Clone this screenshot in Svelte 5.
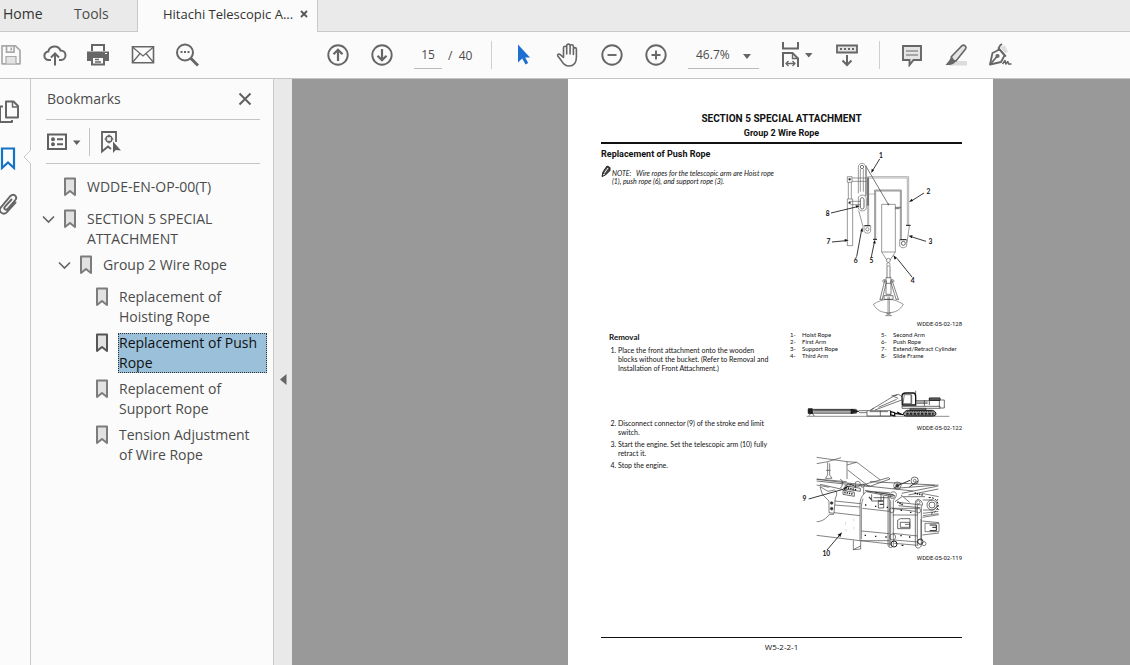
<script lang="ts">
  let selected = $state(4);
  let pageNumber = $state('15');

  const bookmarks = [
    { label: 'WDDE-EN-OP-00(T)', depth: 0, open: false },
    { label: 'SECTION 5 SPECIAL ATTACHMENT', depth: 0, open: true },
    { label: 'Group 2 Wire Rope', depth: 1, open: true },
    { label: 'Replacement of Hoisting Rope', depth: 2, open: false },
    { label: 'Replacement of Push Rope', depth: 2, open: false },
    { label: 'Replacement of Support Rope', depth: 2, open: false },
    { label: 'Tension Adjustment of Wire Rope', depth: 2, open: false }
  ];

  const parts = [
    ['1-', 'Hoist Rope', '5-', 'Second Arm'],
    ['2-', 'First Arm', '6-', 'Push Rope'],
    ['3-', 'Support Rope', '7-', 'Extend/Retract Cylinder'],
    ['4-', 'Third Arm', '8-', 'Slide Frame']
  ];
</script>

<div class="app">
  <nav class="tabs" aria-label="Documents">
    <button class="tab home">Home</button>
    <button class="tab tools">Tools</button>
    <div class="tab current">
      <span>Hitachi Telescopic A...</span>
      <button class="tab-close" aria-label="Close tab">
        <svg width="8" height="8" viewBox="0 0 8 8"><path d="M1 1l6 6M7 1l-6 6" stroke="#555" stroke-width="1.8" /></svg>
      </button>
    </div>
    <div class="tab-rest"></div>
  </nav>

  <div class="toolbar" role="toolbar" aria-label="Main tools">
    <div class="group files">
      <button class="tool" aria-label="Save">
        <svg width="24" height="24" viewBox="0 0 24 24" fill="none" stroke="#a9a9a9" stroke-width="1.7"><path d="M3 2.8h13.5l4.5 4.5v13.5H3z" stroke-linejoin="round" /><path d="M7.5 3v6.2h7.5V3M12.2 4.5v3" /><path d="M7 20.5v-7h10v7" fill="#e4e4e4" stroke-width="1.2" /></svg>
      </button>
      <button class="tool" aria-label="Upload">
        <svg width="24" height="24" viewBox="0 0 24 24" fill="none" stroke="#666" stroke-width="2"><path d="M8 17H5.8a4.2 4.2 0 0 1-.5-8.4A6.4 6.4 0 0 1 17.6 7.6 4.7 4.7 0 0 1 18 17h-2" /><path d="M12 22.5V11M8 14.5l4-4 4 4" /></svg>
      </button>
      <button class="tool" aria-label="Print">
        <svg width="24" height="24" viewBox="0 0 24 24" fill="none" stroke="#666" stroke-width="2"><path d="M5 8V2h12v6" /><path d="M0 8.500h22V18h-4v-4H4v4H0z" fill="#666" stroke="none" /><path d="M5 14v7.500h12V14z" fill="#fbfbfb" /><path d="M8 16.500h4M8 19h6" stroke-width="1.300" /><path d="M18 10.500h2" stroke="#fff" stroke-width="1" /></svg>
      </button>
      <button class="tool" aria-label="Email">
        <svg width="24" height="24" viewBox="0 0 24 24" fill="none" stroke="#666" stroke-width="1.600"><path d="M1.500 3.800h21v16h-21z" /><path d="M1.500 4l10.500 9L22.500 4M1.500 19.500l7.500-9M22.500 19.500l-7.500-9" stroke-width="1.200" /></svg>
      </button>
      <button class="tool" aria-label="Search">
        <svg width="24" height="24" viewBox="0 0 24 24" fill="none" stroke="#666" stroke-width="2"><circle cx="10" cy="9.500" r="8" /><path d="M15.500 15l7.500 7.500" stroke-width="3" /><path d="M5.500 9h2M9 9h2M12.500 9h2" /></svg>
      </button>
    </div>

    <div class="group">
      <button class="tool" aria-label="Previous page">
        <svg width="24" height="24" viewBox="0 0 24 24" fill="none" stroke="#666" stroke-width="1.900"><circle cx="12" cy="12" r="9.700" /><path d="M12 18V7M7.500 11.200L12 6.700l4.500 4.500" stroke-width="2.200" /></svg>
      </button>
      <button class="tool" aria-label="Next page">
        <svg width="24" height="24" viewBox="0 0 24 24" fill="none" stroke="#666" stroke-width="1.900"><circle cx="12" cy="12" r="9.700" /><path d="M12 6v11M7.500 12.800l4.500 4.500 4.500-4.500" stroke-width="2.200" /></svg>
      </button>
      <input class="page-input" aria-label="Page number" bind:value={pageNumber} />
      <span class="page-count">/&nbsp; 40</span>
    </div>

    <div class="divider"></div>

    <div class="group">
      <button class="tool" aria-label="Select">
        <svg width="24" height="24" viewBox="0 0 24 24"><path d="M6 1.500v18l4.200-4 3.300 6 2.700-1.500-3-5.500H18z" fill="#1f6fd0" /></svg>
      </button>
      <button class="tool" aria-label="Hand">
        <svg width="24" height="24" viewBox="0 0 24 24" fill="none" stroke="#666" stroke-width="1.600" stroke-linecap="round" stroke-linejoin="round"><path d="M7.500 14.500V4.800a1.600 1.600 0 0 1 3.200 0V11V2.800a1.700 1.700 0 0 1 3.400 0V11V3.400a1.600 1.600 0 0 1 3.300 0V11.500V6a1.500 1.500 0 0 1 3 .200V14c0 5-2 9-7.400 9-4 0-5.600-2-7.500-5.200L1.800 13c-.8-1.500 1.300-2.600 2.500-1.300z" /></svg>
      </button>
      <button class="tool" aria-label="Zoom out">
        <svg width="24" height="24" viewBox="0 0 24 24" fill="none" stroke="#666" stroke-width="1.900"><circle cx="12" cy="12" r="9.700" /><path d="M7.500 12h9" /></svg>
      </button>
      <button class="tool" aria-label="Zoom in">
        <svg width="24" height="24" viewBox="0 0 24 24" fill="none" stroke="#666" stroke-width="1.900"><circle cx="12" cy="12" r="9.700" /><path d="M7.500 12h9M12 7.500v9" /></svg>
      </button>
      <div class="zoom-box">
        <select class="zoom" aria-label="Zoom level"><option>46.7%</option></select>
        <svg class="zoom-arrow" width="8" height="5" viewBox="0 0 8 5"><path d="M0 0h8L4 5z" fill="#666" /></svg>
      </div>
      <button class="tool fit" aria-label="Fit width">
        <svg width="32" height="28" viewBox="0 0 32 28" fill="none" stroke="#666" stroke-width="2"><path d="M2 1v6.500h15V1M2 26V12h9.500l5.500 5.500V26" /><path d="M11.500 12v5.500H17" stroke-width="1.400" /><path d="M5.500 22.500h8M7.500 20l-2.500 2.500L7.500 25M11.500 20l2.500 2.500-2.500 2.500" stroke-width="1.300" /><path d="M24 12h7.500L27.800 16.500z" fill="#666" stroke="none" /></svg>
      </button>
      <button class="tool" aria-label="Reading mode">
        <svg width="24" height="24" viewBox="0 0 24 24" fill="none" stroke="#666" stroke-width="1.800"><path d="M2 2.500h20v7H2z" fill="#e4e4e4" /><path d="M5 6h2M9 6h2M13 6h2M17 6h2M12 12v10M7.500 17.500l4.500 4.500 4.500-4.500" stroke-width="2" /></svg>
      </button>
    </div>

    <div class="divider last"></div>

    <div class="group">
      <button class="tool" aria-label="Comment">
        <svg width="24" height="24" viewBox="0 0 24 24" fill="#e4e4e4" stroke="#666" stroke-width="1.900"><path d="M3 3h18v14h-7.500L9.500 22v-5H3z" /><path d="M6 8h12M6 12h12" stroke-width="1.200" /></svg>
      </button>
      <button class="tool" aria-label="Highlight">
        <svg width="24" height="24" viewBox="0 0 24 24"><path d="M10 18h13v4.500H5z" fill="#dcdcdc" /><path d="M7.500 13.500L18 2.700c2-1.500 5 1 3.700 3L12 18c-2.200-.2-4.200-2-4.500-4.500z" fill="#e4e4e4" stroke="#666" stroke-width="1.600" /><path d="M6.800 13c0 3.500-2.800 6-5.300 9 3.500 0 8 .3 10.500-4-2.500-.5-4.500-2.500-5.200-5z" fill="#666" /></svg>
      </button>
      <button class="tool" aria-label="Sign">
        <svg width="24" height="24" viewBox="0 0 24 24" fill="none" stroke="#666" stroke-width="1.800" stroke-linejoin="round"><path d="M12 4l5-1.500L20 9l-3 1z" fill="#dcdcdc" stroke="none" /><path d="M2 21.500L4.500 10l7-3.500 5 6L13 19z" /><path d="M10.500 7.500c0-3 1-5 3.500-6.500M2 21.500l7-8M10 4.500l8 9" /><circle cx="9.500" cy="13" r="1.200" /><path d="M14.500 21l2.500-3.500.8 3.500 2-2.500.8 2.500H23.500" stroke-width="1.500" /></svg>
      </button>
    </div>
  </div>

  <div class="workspace">
    <nav class="rail" aria-label="Panels">
      <button class="rail-button" aria-label="Page thumbnails">
        <svg width="22" height="24" viewBox="0 0 22 24" fill="none" stroke="#666" stroke-width="2" stroke-linejoin="round"><path d="M8 1.500h7.500L20 6v11.500H8z" /><path d="M14.500 1.500V7H20" stroke-width="1.500" /><path d="M5 6.500H2v15.500h12v-2" /></svg>
      </button>
      <button class="rail-button" aria-label="Bookmarks">
        <svg width="22" height="24" viewBox="0 0 22 24" fill="none" stroke="#1473c6" stroke-width="2.200"><path d="M4 2.500h12v19.500l-6-5.500-6 5.500z" /></svg>
      </button>
      <button class="rail-button" aria-label="Attachments">
        <svg width="22" height="24" viewBox="0 0 22 24" fill="none" stroke="#666" stroke-width="1.900" stroke-linecap="round"><path d="M17.500 10.500l-8.800 9.800c-3.500 3.500-9-1-5.800-5L12.500 4c3-3.200 7.500.5 4.800 4L9.500 17c-1.800 1.800-4.200-.3-2.700-2.200L13.500 7.500" /></svg>
      </button>
      <svg class="notch" width="8" height="18" viewBox="0 0 8 18"><path d="M8 0v2L1 9l7 7v2" fill="#fbfbfb" stroke="#c8c8c8" /></svg>
    </nav>

    <aside class="panel">
      <header class="panel-head">
        <h2>Bookmarks</h2>
        <button class="plain" aria-label="Close bookmarks">
          <svg width="14" height="14" viewBox="0 0 14 14"><path d="M1.500 1.500l11 11M12.500 1.500l-11 11" stroke="#606060" stroke-width="2" /></svg>
        </button>
      </header>
      <div class="panel-tools">
        <button class="plain options" aria-label="Options">
          <svg width="34" height="18" viewBox="0 0 34 18" fill="none" stroke="#606060" stroke-width="2"><path d="M1 1.500h18v14.500H1z" /><circle cx="6" cy="6.300" r="1" /><circle cx="6" cy="11.300" r="1" /><path d="M10 6.300h6M10 11.300h6" /><path d="M26 7.500h7.500L29.700 12z" fill="#606060" stroke="none" /></svg>
        </button>
        <button class="plain find" aria-label="Find current bookmark">
          <svg width="22" height="24" viewBox="0 0 22 24" fill="none" stroke="#606060" stroke-width="1.800"><path d="M11 19l-3-2.500-6 5V2h14v10" /><circle cx="9" cy="9" r="3" stroke-width="1.300" /><path d="M9 4.500v3M9 10.500v3M4.500 9h3M10.500 9h3" stroke-width="1.200" /><path d="M13 11.500v11.500l2.800-3 5.200.5z" fill="#606060" stroke="none" /></svg>
        </button>
      </div>
      <ul class="tree">
        {#each bookmarks as item, i}
          <li class="depth-{item.depth}" class:selected={selected === i}>
            <span class="chevron">
              {#if item.open}
                <button class="plain" aria-label="Collapse {item.label}">
                  <svg width="14" height="9" viewBox="0 0 14 9" fill="none" stroke="#666" stroke-width="1.700"><path d="M1 1.500L6.500 7 12 1.500" /></svg>
                </button>
              {/if}
            </span>
            <svg class="mark" width="12" height="20" viewBox="0 0 12 20" fill="#e2e2e2" stroke={selected === i ? '#555' : '#7c7c7c'} stroke-width="2"><path d="M1 1.500h10v16.500l-5-4-5 4z" stroke-linejoin="round" /></svg>
            <a href="#bookmark-{i}" onclick={() => (selected = i)}>{item.label}</a>
          </li>
        {/each}
      </ul>
    </aside>

    <button class="splitter" aria-label="Hide panel">
      <svg width="7" height="11" viewBox="0 0 7 11"><path d="M6.500 0v11L0 5.500z" fill="#666" /></svg>
    </button>

    <main class="viewer">
      <article class="page">
        <header class="page-head">
          <h1>SECTION 5 SPECIAL ATTACHMENT</h1>
          <p>Group 2 Wire Rope</p>
        </header>

        <section class="row intro">
          <div>
            <h3>Replacement of Push Rope</h3>
            <div class="note">
              <svg width="10" height="13" viewBox="0 0 10 13"><path d="M1 11.500l1-4.500L6 1l3 1.500v3L4.500 10z" fill="#444" stroke="#222" /><path d="M3.500 8L7 3M2 10l2-1" stroke="#fff" /></svg>
              <p><span class="note-tag">NOTE:</span>Wire ropes for the telescopic arm are Hoist rope<br />(1), push rope (6), and support rope (3).</p>
            </div>
          </div>
          <figure>
            <svg class="drawing" viewBox="-39 0 525 525" fill="none" stroke="#666" stroke-width="2">
              <path d="M142 95h14v17h-14zM145 112v50M154 112v50M142 162h16v140h-16zM156 99h44M156 109h44M151 169h30M151 179h30" />
              <circle cx="149" cy="103" r="3" fill="#222" /><circle cx="149" cy="173" r="3" fill="#222" />
              <path d="M175 145V67c0-16 22-16 22 0v86M181 72v68M190 72v68" />
              <circle cx="186" cy="66" r="5" stroke="#333" />
              <path d="M175 188v-28c0-13 24-13 24 0v28c0 13-24 13-24 0z" /><path d="M181 186v-22c0-8 11-8 11 0v22c0 8-11 8-11 0z" stroke="#222" />
              <path d="M198 64l67 114" stroke="#333" /><circle cx="265" cy="178" r="2" fill="#111" />
              <path d="M176 197l13 48M199 62v90" />
              <path d="M203 244V95h123v146M206 240V99h116v142M208 147h16" stroke-width="1.500" />
              <path d="M204 97v85" stroke="#333" stroke-width="3" />
              <path d="M224 283V135h80v149M227 283V138h74v146" stroke="#333" stroke-width="1.500" />
              <path d="M219 283h12M318 241h14" stroke="#111" stroke-width="3" />
              <path d="M192 242h20v15c0 10-20 10-20 0z" /><circle cx="202" cy="253" r="5" /><path d="M194 242h16" stroke="#222" stroke-width="3" />
              <path d="M299 284h21v16c0 11-21 11-21 0z" /><circle cx="310" cy="295" r="6" stroke="#222" /><path d="M301 284h18" stroke="#222" stroke-width="3" />
              <path d="M285 187h17M285 191h14" stroke="#222" /><path d="M328 243l-7 50" />
              <path d="M245 178h41v143h-41zM245 321l16 25M286 321l-16 25" />
              <circle cx="265" cy="346" r="6" /><circle cx="265" cy="358" r="5" />
              <path d="M261 363v35M270 363v35M258 398h15v50h-15zM258 415h15M255 403l-15 60M260 407l-13 55M275 403l20 60M271 407l17 55" stroke="#444" />
              <circle cx="252" cy="408" r="4" /><circle cx="278" cy="408" r="4" />
              <path d="M220 478c13-8 27-15 45-15s32 7 45 15c-10 17-23 25-45 25s-35-8-45-25zM264 455v52M268 455v52M257 503l17 9M274 503l-17 9M257 512h18" />
              <path d="M252 452h27v11h-27zM239 463h10M287 463h10" stroke="#333" />
              <g stroke="#111" stroke-width="2.500">
                <path d="M239 42l-22 36M372 144l-38 24M93 204l75-18M96 291l42-4M170 335l14-76M214 336l9-44M378 289l-45-14M336 396l-45-56" />
                <path d="M214 84l1-13 7 5zM327 171l8-10 4 7zM179 183l-12-2 2 8zM146 286l-12-4v8zM187 247l-6 12 8 1zM225 284l-6 10 8 2zM326 272l12-1-3 9zM280 331l4 13 7-6z" fill="#111" stroke="none" />
              </g>
              <g class="callout"><text x="243" y="39">1</text><text x="385" y="147">2</text><text x="391" y="297">3</text><text x="338" y="414">4</text><text x="214" y="354">5</text><text x="167" y="354">6</text><text x="85" y="297">7</text><text x="83" y="213">8</text></g>
            </svg>
            <figcaption>WDDE-05-02-128</figcaption>
          </figure>
        </section>

        <section class="row">
          <div class="procedure">
            <h4>Removal</h4>
            <ol>
              <li class="first">Place the front attachment onto the wooden<br />blocks without the bucket. (Refer to Removal and<br />Installation of Front Attachment.)</li>
              <li>Disconnect connector (9) of the stroke end limit<br />switch.</li>
              <li>Start the engine. Set the telescopic arm (10) fully<br />retract it.</li>
              <li>Stop the engine.</li>
            </ol>
          </div>
          <div>
            <table>
              <tbody>
                {#each parts as row}
                  <tr>{#each row as cell}<td>{cell}</td>{/each}</tr>
                {/each}
              </tbody>
            </table>
            <figure class="machine">
              <svg class="drawing" viewBox="-24 0 525 132" fill="none" stroke="#333" stroke-width="2">
                <path d="M35 109h428" stroke="#555" />
                <path d="M40 88h144v12H40z" fill="#aaa" stroke="#333" /><path d="M55 90h125" stroke="#222" stroke-width="3" />
                <path d="M40 86h12v14H40zM42 107l10-12M50 98l8 10M168 88l24 6-24 7z" fill="#222" stroke="#111" />
                <path d="M192 92h24M192 98h24M216 92h71v16h-71zM256 92v16M224 95h55" />
                <path d="M225 91l12-7 58-35 16-6 10 7M240 90l80-30M237 84l-8 6M295 49l15 6M250 82l55-24M289 48l18-4" />
                <path d="M287 95l12 3v10l-12-3zM299 100l25 4M306 96l14 7" stroke="#111" stroke-width="4" />
                <path d="M322 75l-1-26c0-8 5-10 12-10h22c6 0 7 4 7 10v26z" stroke="#111" stroke-width="4" /><path d="M328 44h20v27h-24zM350 43v30M362 32v10" />
                <path d="M362 75V62h41v13M403 60h45v24h-13M321 79h114v6H321zM365 66h33M365 70h33M433 63v19M388 61v17" stroke="#222" />
                <path d="M403 54h32v7h-32zM405 57h28" stroke="#111" stroke-width="3" />
                <path d="M345 85h48v7h-48z" fill="#777" />
                <path d="M337 91h75c9 2 11 8 11 11s-4 6-11 6h-77c-8 0-10-3-10-6s5-9 12-11z" fill="#999" stroke="#111" stroke-width="3" />
                <path d="M334 101h82" stroke="#222" stroke-width="6" stroke-dasharray="7 4" />
                <path d="M336 94h78M334 105h80" stroke="#333" stroke-dasharray="4 3" stroke-width="3" />
              </svg>
              <figcaption>WDDE-05-02-122</figcaption>
            </figure>
            <figure class="detail">
              <svg class="drawing" viewBox="-24 0 525 327" fill="none" stroke="#444" stroke-width="2">
                <path d="M65 37l91 13 30 2 70 53M65 56l33-6 40-12M156 50v52M156 60l28-8M158 75l62 48M65 102l90 8M65 120l38 7M98 52v38l-7 10h20l-7-10V55M93 76h14" />
                <path d="M65 103l160 19M65 108l160 17M75 118l80 18M205 119l75-21 5 4-60 22M225 124l130 14M210 136l90 16M225 110l195 10M300 130l130-10M320 145l110-22M340 150l90-18" stroke="#333" />
                <path d="M136 103c8 0 8 25 0 25M150 122l46 8v9l-46-7zM144 136l34 6v12l-34-6z" stroke="#222" />
                <path d="M152 128l34 7M148 142l25 5M166 118l18 8" stroke="#222" stroke-width="5" stroke-dasharray="4 3" />
                <circle cx="188" cy="117" r="8" /><circle cx="203" cy="122" r="5" /><circle cx="160" cy="121" r="5" />
                <path d="M75 125l24 14 20-4c10 8 6 16 2 24l-4 46-15-2V168l-20-20zM119 168l78 8M119 180l76 6M117 203l78 9M65 230c16 0 30-10 38-22h14M65 271l130 16M175 286v28l22-2v-25M175 314l23-12M198 287h85" />
                <circle cx="110" cy="174" r="4" fill="#333" /><circle cx="110" cy="191" r="4" fill="#333" />
                <path d="M195 287V178c0-14 5-24 11-30v-21M195 287l90 10M206 148l8-9 70 4M204 161c-4 12-5 20-5 30v92M202 190l81 9M200 258l83 8M283 155v150" stroke="#444" />
                <path d="M215 140l80 16M230 148v20h28v-20M250 164v25h16v-36M240 142l55 7M236 158h45" stroke="#222" />
                <path d="M252 168h14M254 178h12M222 156l8 8" stroke="#444" stroke-width="4" />
                <path d="M280 155c5-14 16-18 22-12 6 8-3 18-7 24v130c0 14-16 14-16 2V165zM287 166v135M291 190h76M293 210h75M293 265l75 8M296 285l74 6M298 295l72 6" stroke="#444" />
                <path d="M370 163c-8 0-9 8-9 14v122c0 15 18 12 18 0V185c6-5 4-18-9-22zM367 180v120M361 199l-65-8" stroke="#333" />
                <circle cx="307" cy="122" r="11" /><circle cx="307" cy="122" r="5" fill="#333" /><circle cx="359" cy="107" r="11" stroke="#222" /><circle cx="359" cy="107" r="4" /><path d="M296 130l23-14M343 126l26-18M345 106l-30 13" stroke="#333" stroke-width="3" />
                <circle cx="292" cy="155" r="6" /><circle cx="290" cy="196" r="7" /><circle cx="293" cy="276" r="9" /><circle cx="297" cy="297" r="9" stroke="#222" stroke-width="3" /><circle cx="370" cy="197" r="7" /><circle cx="370" cy="172" r="5" /><circle cx="376" cy="290" r="8" stroke="#222" stroke-width="3" /><circle cx="387" cy="296" r="6" />
                <path d="M310 172l70 8M310 182l66 6M325 155h65M383 165h30M384 195h30l18-14M318 150l26 22M300 170l22-16" stroke="#333" />
                <path d="M307 171l18 9M383 150l-26-6" stroke="#222" stroke-width="5" stroke-dasharray="4 3" />
                <circle cx="411" cy="180" r="15" stroke="#333" /><circle cx="411" cy="180" r="9" stroke="#222" /><path d="M401 158c15-3 28 8 28 23s-10 24-24 23M425 167l6-6M427 190l5 6" stroke="#222" stroke-dasharray="6 4" stroke-width="3" />
                <path d="M380 145l51 10M382 217l50-8M382 228l50 5M382 270l50-6M378 222v65M390 235h42v25h-42zM384 205l46-6M384 212l46-6" /><path d="M404 240h20v17h-20M412 247h12" stroke="#222" stroke-width="3" />
                <path d="M308 226l8-5h29v30h-37zM316 232h28v15h-28zM330 238h13" stroke="#222" />
                <path d="M210 180h4M240 184h4M275 187h4M209 271h4M240 274h4M271 276h4M317 196h4M345 202h4M316 272h4M342 276h4M320 301h5" stroke="#111" stroke-width="4" />
                <path d="M152 230v10M176 220v9M153 252v8M177 245v8" stroke="#ccc" />
                <path d="M41 162l103-29M151 127l10-3M96 315l40-47" stroke="#111" stroke-width="2.500" /><path d="M141 262l-13 7 8 7zM154 126l-10 3 5 6z" fill="#111" stroke="none" />
                <g class="callout"><text x="28" y="169">9</text><text x="94" y="332">10</text></g>
              </svg>
              <figcaption>WDDE-05-02-119</figcaption>
            </figure>
          </div>
        </section>

        <footer>W5-2-2-1</footer>
      </article>
    </main>
  </div>
</div>

<style>
  :global(body) { margin: 0; }
  .app { height: 100vh; display: flex; flex-direction: column; overflow: hidden; background: #fbfbfb; color: #4b4b4b; font-family: "Open Sans", "Noto Sans", sans-serif; font-size: 14px; }
  button { border: 0; padding: 0; background: none; color: inherit; font: inherit; cursor: pointer; }
  svg { display: block; }
  h1, h2, h3, h4, p, ul, ol, figure { margin: 0; padding: 0; }

  .tabs { display: flex; flex: none; height: 32px; box-sizing: border-box; }
  .tab { box-sizing: border-box; padding-bottom: 4px; background: #eaeaea; border-bottom: 1px solid #c9c9c9; font-size: 14px; line-height: 24px; text-align: left; color: #333; }
  .home { width: 60px; padding-left: 3px; }
  .tools { width: 77px; padding-left: 14px; color: #4b4b4b; }
  .current { display: flex; align-items: center; justify-content: space-between; width: 181px; padding: 0 8px 4px 25px; background: #fbfbfb; border: 1px solid #c9c9c9; border-width: 0 1px; font-size: 13px; white-space: nowrap; }
  .tab-close { padding: 1px; }
  .tab-rest { flex: 1; background: #eaeaea; border-bottom: 1px solid #c9c9c9; }

  .toolbar { display: flex; flex: none; align-items: center; height: 47px; box-sizing: border-box; border-bottom: 1px solid #c4c4c4; }
  .group { display: flex; align-items: center; }
  .files { margin: 0 107px 0 -11px; }
  .tool { display: flex; justify-content: center; align-items: center; width: 44px; height: 40px; flex: none; }
  .page-input { width: 28px; box-sizing: border-box; margin-left: 10px; padding: 0; height: 27px; border: 0; border-bottom: 1px solid #bbb; background: none; text-align: center; font: 12px "Open Sans", sans-serif; color: #4b4b4b; }
  .page-count { margin-left: 6px; width: 24px; font-size: 12px; white-space: nowrap; }
  .divider { width: 1px; height: 28px; margin: 0 10px 0 19px; background: #cfcfcf; }
  .last { margin: 0 10px; }
  .zoom-box { position: relative; margin: 0 14px 0 10px; }
  .zoom { appearance: none; width: 71px; height: 27px; padding: 0 8px; border: 0; border-bottom: 1px solid #bbb; border-radius: 0; background: none; font: 12px "Open Sans", sans-serif; color: #4b4b4b; }
  .zoom-arrow { position: absolute; right: 8px; top: 12px; pointer-events: none; }
  .fit { width: 52px; justify-content: flex-start; padding-left: 8px; }

  .workspace { display: flex; flex: 1; min-height: 0; }
  .rail { position: relative; display: flex; flex-direction: column; gap: 22px; width: 30px; flex: none; padding-top: 21px; border-right: 1px solid #c8c8c8; }
  .rail-button { width: 22px; height: 24px; margin-left: -2px; }
  .notch { position: absolute; right: -1px; top: 69px; }

  .panel { width: 243px; box-sizing: border-box; flex: none; border-right: 1px solid #c8c8c8; }
  .panel-head { display: flex; align-items: center; justify-content: space-between; height: 40px; margin: 0 13px 0 15px; padding-right: 8px; border-bottom: 1px solid #c4c4c4; }
  h2 { font-size: 14px; font-weight: 400; line-height: 20px; padding-left: 1px; }
  .panel-tools { display: flex; align-items: center; height: 43px; margin: 0 13px 0 15px; border-bottom: 1px solid #c4c4c4; }
  .options { padding: 5px 8px 5px 1px; border-right: 1px solid #c4c4c4; }
  .find { margin-left: 10px; }
  .tree { display: flex; flex-direction: column; gap: 6px; padding: 13px 6px 0 11px; list-style: none; }
  .tree li { display: flex; align-items: flex-start; min-height: 26px; }
  .tree .depth-1 { padding-left: 16px; }
  .tree .depth-2 { padding-left: 32px; }
  .chevron { display: flex; width: 22px; flex: none; padding-top: 6px; }
  .mark { flex: none; margin-right: 10px; }
  .tree a { flex: 1; padding: 0 4px 0 1px; color: #4b4b4b; font-size: 14px; line-height: 20px; text-decoration: none; }
  .tree .selected a { background: #9ac0da; color: #111; outline: 1px dotted #333; outline-offset: -1px; }

  .splitter { display: flex; align-items: center; justify-content: center; width: 18px; flex: none; background: #e9e9e9; }
  .splitter svg { margin-top: 14px; }

  .viewer { display: flex; flex: 1; min-width: 0; justify-content: center; padding-left: 139px; background: #999; overflow: hidden; }
  .page { display: flex; flex-direction: column; width: 425px; flex: none; box-sizing: border-box; padding: 33px 31px 0 33px; background: #fff; color: #111; font: 7px Lato, sans-serif; }
  .page-head { border-bottom: 2px solid #111; padding-bottom: 2px; text-align: center; font-family: Roboto, sans-serif; }
  h1 { font-size: 10px; line-height: 14px; }
  .page-head p { font-size: 9px; font-weight: 700; line-height: 14px; }
  .row { display: grid; grid-template-columns: 186px 1fr; }
  .intro { padding-top: 1px; }
  h3 { padding-top: 2px; font: 700 9px/14px Roboto, sans-serif; }
  .note { display: flex; gap: 1px; padding-top: 4px; font-style: italic; line-height: 8px; white-space: nowrap; }
  .note p { padding-top: 4px; }
  .note-tag { display: inline-block; width: 24px; }
  .drawing { width: 100%; height: auto; overflow: visible; }
  .callout text { fill: #111; stroke: none; font: 700 20px Lato, sans-serif; text-anchor: middle; }
  figcaption { font: 6px/8px Roboto, sans-serif; text-align: right; }
  .procedure { padding: 4px 0 0 8px; }
  h4 { font: 700 8px/10px Lato, sans-serif; }
  ol { display: flex; flex-direction: column; gap: 3px; padding: 4px 0 0 9px; line-height: 9px; white-space: nowrap; }
  .first { margin-bottom: 43px; }
  table { width: 100%; border-collapse: collapse; font: 6px/7px Lato, sans-serif; margin-top: 3px; table-layout: fixed; }
  td { padding: 0 0 0 3px; white-space: nowrap; }
  td:nth-child(odd) { width: 9px; }
  td:nth-child(2) { width: 76px; }
  .machine { padding-top: 21px; }
  .detail { padding-top: 13px; }
  footer { margin-top: auto; margin-bottom: 12px; padding-top: 3px; border-top: 1px solid #111; text-align: center; font: 8px/12px "Open Sans", sans-serif; }
</style>
